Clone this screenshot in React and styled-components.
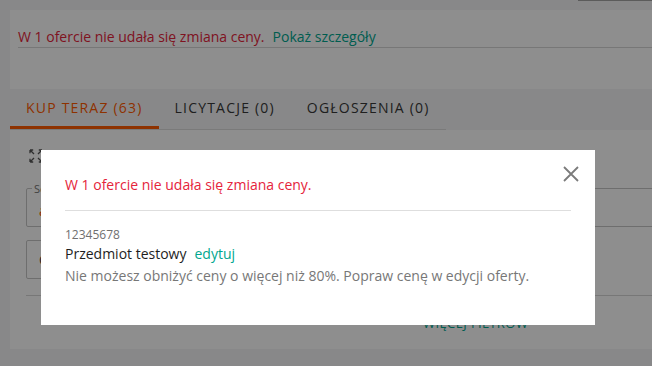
import React from "react";
import styled, { createGlobalStyle } from "styled-components";

const GlobalStyle = createGlobalStyle`
  html, body { margin: 0; padding: 0; }
  body {
    background: #f4f5f6;
    font-family: "Open Sans", "Noto Sans", sans-serif;
    overflow: hidden;
    width: 652px;
    height: 366px;
  }
  * { box-sizing: border-box; }
`;

const Page = styled.div`
  width: 1000px;
  padding-left: 10px;
`;

const TopStrip = styled.div`
  height: 10px;
  width: 642px;
  display: flex;
  justify-content: flex-end;
`;

const TopEdge = styled.div`
  width: 74px;
  height: 1px;
  background: #a3a3a3;
`;

const AlertCard = styled.section`
  background: #fff;
  padding: 16px 0 41px 8px;
`;

const AlertLine = styled.div`
  font-size: 14px;
  line-height: 21px;
  border-bottom: 1px solid #d6d6d6;
`;

const ErrorText = styled.span`
  color: #e5243b;
`;

const LinkText = styled.a`
  color: #00a790;
  text-decoration: none;
  margin-left: ${(p) => p.$gap || 0}px;
  cursor: pointer;
`;

const TabList = styled.nav`
  display: flex;
  width: fit-content;
  border-bottom: 1px solid #dcdcdc;
`;

const Tab = styled.div`
  height: 40px;
  padding: 0 16px;
  line-height: 37px;
  font-size: 14px;
  letter-spacing: 1.2px;
  text-transform: uppercase;
  color: ${(p) => (p.$active ? "#ff5a00" : "#383838")};
  border-bottom: 3px solid ${(p) => (p.$active ? "#ff5a00" : "transparent")};
`;

const ContentCard = styled.section`
  background: #fff;
  height: 219px;
  padding: 18px 0 0 16px;
`;

const ExpandRow = styled.div`
  display: flex;
  align-items: center;
  gap: 6px;
  height: 16px;
  padding-left: 2px;
  font-size: 11px;
  color: #555;
`;

const Field = styled.div`
  position: relative;
  width: ${(p) => p.$width}px;
  height: 39px;
  margin-top: ${(p) => p.$top}px;
  border: 1px solid #c6c6c6;
  border-radius: 2px;
  padding: ${(p) => (p.$labelled ? "6px 12px 0" : "0 12px")};
  font-size: 14px;
  line-height: ${(p) => (p.$labelled ? "31px" : "37px")};
  color: ${(p) => p.$color};
`;

const FieldLabel = styled.span`
  position: absolute;
  top: -7px;
  left: 5px;
  padding: 0 2px;
  background: #fff;
  font-size: 11px;
  line-height: 13px;
  color: #777;
`;

const Rule = styled.hr`
  margin: 16px 0 0;
  border: 0;
  border-top: 1px solid #d6d6d6;
`;

const MoreRow = styled.div`
  padding: 17px 0 0 397px;
  font-size: 13px;
  line-height: 20px;
  letter-spacing: 0.4px;
  text-transform: uppercase;
  color: #00a790;
`;

const Overlay = styled.div`
  position: fixed;
  inset: 0;
  background: rgba(0, 0, 0, 0.443);
`;

const Modal = styled.div`
  position: fixed;
  left: 41px;
  top: 150px;
  width: 554px;
  height: 175px;
  background: #fff;
  padding: 25px 24px 0;
`;

const CloseButton = styled.button`
  position: absolute;
  top: 16px;
  right: 16px;
  width: 16px;
  height: 16px;
  padding: 0;
  border: 0;
  background: none;
  cursor: pointer;
  display: block;
`;

const ModalTitle = styled.h2`
  margin: 0;
  font-size: 14px;
  line-height: 20px;
  font-weight: 400;
  color: #e5243b;
  padding-bottom: 15px;
  border-bottom: 1px solid #dedede;
`;

const OfferBlock = styled.div`
  padding-top: 15px;
`;

const OfferId = styled.div`
  font-size: 12px;
  line-height: 17px;
  color: #707070;
`;

const OfferName = styled.div`
  font-size: 14px;
  line-height: 22px;
  color: #1e1e1e;
`;

const OfferError = styled.div`
  font-size: 14px;
  line-height: 21px;
  color: #777;
`;

const ExpandIcon = () => (
  <svg width="16" height="16" viewBox="0 0 16 16" fill="none" stroke="#555" strokeWidth="1.3">
    <path d="M2 2l4 4M2 2h3.2M2 2v3.2" />
    <path d="M14 2l-4 4M14 2h-3.2M14 2v3.2" />
    <path d="M2 14l4-4M2 14h3.2M2 14v-3.2" />
    <path d="M14 14l-4-4M14 14h-3.2M14 14v-3.2" />
  </svg>
);

const CloseIcon = () => (
  <svg width="16" height="16" viewBox="0 0 16 16" fill="none" stroke="#7b7b7b" strokeWidth="1.8">
    <path d="M1 1l14 14M15 1L1 15" />
  </svg>
);

export default function App() {
  return (
    <>
      <GlobalStyle />
      <Page>
        <TopStrip>
          <TopEdge />
        </TopStrip>
        <AlertCard>
          <AlertLine>
            <ErrorText>W 1 ofercie nie udała się zmiana ceny.</ErrorText>
            <LinkText $gap={8}>Pokaż szczegóły</LinkText>
          </AlertLine>
        </AlertCard>
        <TabList>
          <Tab $active>Kup teraz (63)</Tab>
          <Tab>Licytacje (0)</Tab>
          <Tab>Ogłoszenia (0)</Tab>
        </TabList>
        <ContentCard>
          <ExpandRow>
            <ExpandIcon />
            <span>Zwiń</span>
          </ExpandRow>
          <Field $width={960} $top={24} $labelled $color="#ff5a00">
            <FieldLabel>Sortowanie</FieldLabel>
            aktualność
          </Field>
          <Field $width={520} $top={13} $color="#444">
            Cena
          </Field>
          <Rule />
          <MoreRow>Więcej filtrów</MoreRow>
        </ContentCard>
      </Page>
      <Overlay />
      <Modal role="dialog">
        <CloseButton aria-label="Zamknij">
          <CloseIcon />
        </CloseButton>
        <ModalTitle>W 1 ofercie nie udała się zmiana ceny.</ModalTitle>
        <OfferBlock>
          <OfferId>12345678</OfferId>
          <OfferName>
            Przedmiot testowy<LinkText $gap={8}>edytuj</LinkText>
          </OfferName>
          <OfferError>
            Nie możesz obniżyć ceny o więcej niż 80%. Popraw cenę w edycji oferty.
          </OfferError>
        </OfferBlock>
      </Modal>
    </>
  );
}
